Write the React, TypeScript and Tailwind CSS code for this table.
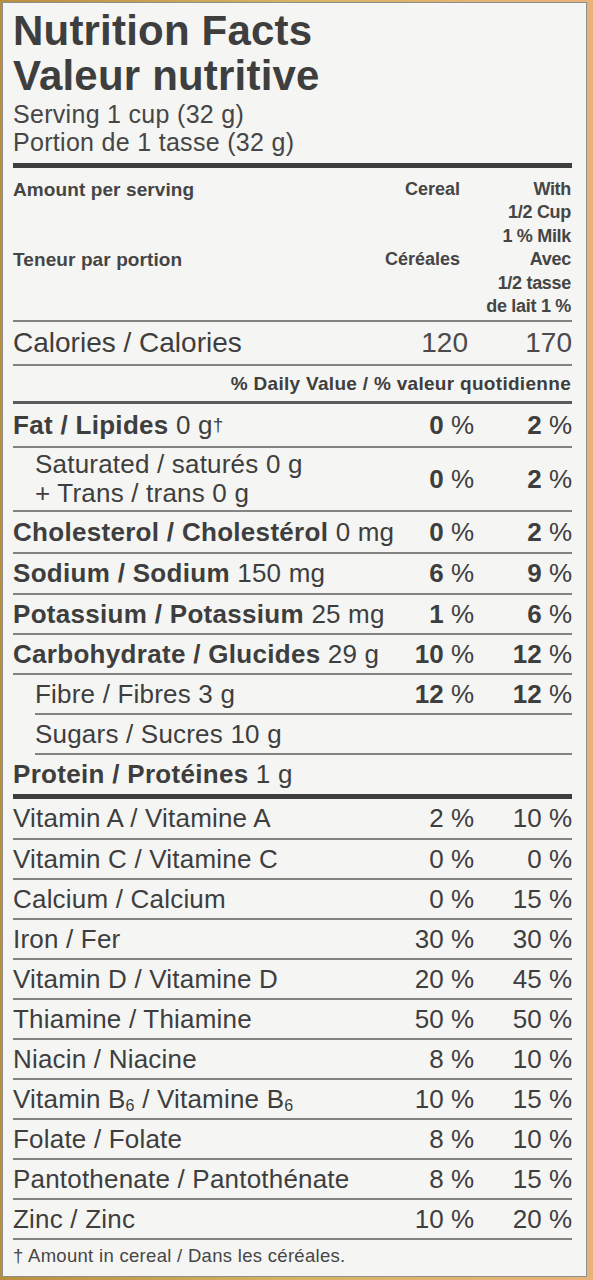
import React from "react";

const Rule = ({ indent = false, thick = false }: { indent?: boolean; thick?: boolean }) => (
  <div
    className={
      thick
        ? "h-[5px] bg-[#3e3e3e]"
        : indent
        ? "ml-[22px] h-[2px] bg-[#838383]"
        : "h-[2px] bg-[#838383]"
    }
  />
);

const Pct = ({ v, bold }: { v: string; bold?: boolean }) => (
  <span className="whitespace-nowrap">
    <span className={bold ? "font-bold" : ""}>{v}</span> %
  </span>
);

const Row = ({
  h,
  indent,
  children,
  c,
  w,
  bold,
}: {
  h: string;
  indent?: boolean;
  children: React.ReactNode;
  c?: string;
  w?: string;
  bold?: boolean;
}) => (
  <div className={`flex items-center ${h}`}>
    <div className={indent ? "flex-1 min-w-0 pl-[22px] whitespace-nowrap" : "flex-1 min-w-0 whitespace-nowrap"}>{children}</div>
    <div className="w-[100px] shrink-0 text-right tracking-normal">{c !== undefined ? <Pct v={c} bold={bold} /> : null}</div>
    <div className="w-[98px] shrink-0 text-right tracking-normal">{w !== undefined ? <Pct v={w} bold={bold} /> : null}</div>
  </div>
);

const B = ({ children }: { children: React.ReactNode }) => (
  <span className="font-bold tracking-[0.3px]">{children}</span>
);

const Sub6 = () => <sub className="text-[16px] relative top-[3px]">6</sub>;

export default function App() {
  const vitamins: [React.ReactNode, string, string][] = [
    ["Vitamin C / Vitamine C", "0", "0"],
    ["Calcium / Calcium", "0", "15"],
    ["Iron / Fer", "30", "30"],
    ["Vitamin D / Vitamine D", "20", "45"],
    ["Thiamine / Thiamine", "50", "50"],
    ["Niacin / Niacine", "8", "10"],
    [
      <>
        Vitamin B<Sub6 /> / Vitamine B<Sub6 />
      </>,
      "10",
      "15",
    ],
    ["Folate / Folate", "8", "10"],
    ["Pantothenate / Pantothénate", "8", "15"],
    ["Zinc / Zinc", "10", "20"],
  ];

  return (
    <div className="w-[593px] h-[1280px] bg-linear-to-r from-[#b98f3c] via-[#d6b462] to-[#eab27a] pl-[2px] pt-[2px] pr-[6px] pb-[3px] font-['Liberation_Sans',Arial,sans-serif] text-[#3e3e3e]">
      <div className="h-full bg-[#f5f5f3] border border-[#8e8e8e] pl-[10px] pr-[14px] pt-[5px]">
        <div className="text-[42px] leading-[45px] font-bold tracking-[0.2px]">
          <div>Nutrition Facts</div>
          <div>Valeur nutritive</div>
        </div>
        <div className="mt-[2px] text-[25px] leading-[28px] tracking-[0.3px] text-[#464646]">
          <div>Serving 1 cup (32 g)</div>
          <div>Portion de 1 tasse (32 g)</div>
        </div>
        <div className="mt-[7px]">
          <Rule thick />
        </div>

        {/* header */}
        <div className="mt-[10px] flex text-[18px] leading-[23.4px] font-bold mb-[2px] text-[#454545]">
          <div className="flex-1 text-[19px] tracking-[0.1px]">
            <div>Amount per serving</div>
            <div className="mt-[46.8px]">Teneur par portion</div>
          </div>
          <div className="w-[100px] text-right pr-[14px]">
            <div>Cereal</div>
            <div className="mt-[46.8px]">Céréales</div>
          </div>
          <div className="w-[98px] text-right pr-[1px] tracking-[-0.3px]">
            <div>With</div>
            <div>1/2 Cup</div>
            <div>1 % Milk</div>
            <div>Avec</div>
            <div>1/2 tasse</div>
            <div>de lait 1 %</div>
          </div>
        </div>
        <Rule />

        {/* calories */}
        <div className="flex items-center h-[42px] text-[28px]">
          <div className="flex-1">Calories / Calories</div>
          <div className="w-[100px] text-right pr-[6px] text-[#4a4a4a]">120</div>
          <div className="w-[98px] text-right text-[#4a4a4a]">170</div>
        </div>
        <Rule />

        <div className="flex items-center justify-end h-[35px] text-[19px] tracking-[0.3px] font-bold pr-[1px]">
          % Daily Value / % valeur quotidienne
        </div>
        <div className="h-[3px] bg-[#5a5a5a]" />

        <div className="text-[26px] tracking-[0.2px]">
          <Row h="h-[42px]" c="0" w="2" bold>
            <B>Fat / Lipides</B> 0 g<sup className="text-[19px] relative top-[-3px]">†</sup>
          </Row>
          <Rule />
          <Row h="h-[62px]" indent c="0" w="2" bold>
            <div className="leading-[29px]">
              <div>Saturated / saturés 0 g</div>
              <div>+ Trans / trans 0 g</div>
            </div>
          </Row>
          <Rule />
          <Row h="h-[40px]" c="0" w="2" bold>
            <B>Cholesterol / Cholestérol</B> 0 mg
          </Row>
          <Rule />
          <Row h="h-[39px]" c="6" w="9" bold>
            <B>Sodium / Sodium</B> 150 mg
          </Row>
          <Rule />
          <Row h="h-[38px]" c="1" w="6" bold>
            <B>Potassium / Potassium</B> 25 mg
          </Row>
          <Rule />
          <Row h="h-[38px]" c="10" w="12" bold>
            <B>Carbohydrate / Glucides</B> 29 g
          </Row>
          <Rule />
          <Row h="h-[38px]" indent c="12" w="12" bold>
            Fibre / Fibres 3 g
          </Row>
          <Rule indent />
          <Row h="h-[38px]" indent>
            Sugars / Sucres 10 g
          </Row>
          <Rule indent />
          <Row h="h-[39px]">
            <B>Protein / Protéines</B> 1 g
          </Row>
          <Rule thick />
          <Row h="h-[39px]" c="2" w="10">
            Vitamin A / Vitamine A
          </Row>
          {vitamins.map(([label, c, w], i) => (
            <React.Fragment key={i}>
              <Rule />
              <Row h="h-[38px]" c={c} w={w}>
                {label}
              </Row>
            </React.Fragment>
          ))}
          <Rule />
        </div>
        <div className="mt-[2px] text-[18.5px] tracking-[0.3px] text-[#464646]">
          † Amount in cereal / Dans les céréales.
        </div>
      </div>
    </div>
  );
}
